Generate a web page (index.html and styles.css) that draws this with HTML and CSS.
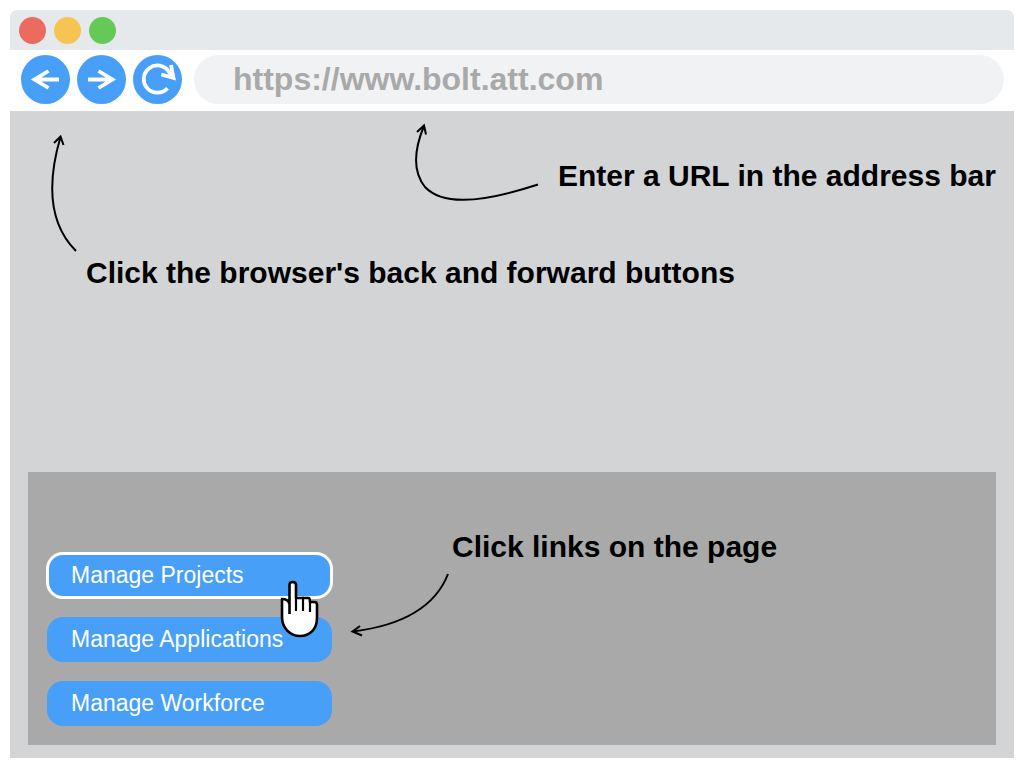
FILE: index.html
```html
<!DOCTYPE html>
<html lang="en">
<head>
<meta charset="utf-8">
<meta name="viewport" content="width=device-width, initial-scale=1">
<title>Browser basics</title>
<link rel="stylesheet" href="styles.css">
</head>
<body>
<div class="browser">
  <header class="titlebar">
    <span class="dot dot-close"></span>
    <span class="dot dot-minimize"></span>
    <span class="dot dot-zoom"></span>
  </header>
  <nav class="toolbar" aria-label="Browser controls">
    <button class="tool" type="button" aria-label="Back">
      <svg viewBox="0 0 49 49" fill="none" stroke="#fff" stroke-width="3.800"><path d="M38 24.500H14M27.500 16 13.500 24.500 27.500 33"/></svg>
    </button>
    <button class="tool" type="button" aria-label="Forward">
      <svg viewBox="0 0 49 49" fill="none" stroke="#fff" stroke-width="3.800"><path d="M11 24.500H35M21.500 16 35.500 24.500 21.500 33"/></svg>
    </button>
    <button class="tool" type="button" aria-label="Reload">
      <svg viewBox="0 0 49 49" fill="none" stroke="#fff" stroke-width="3.800"><path d="M34.500 33.200A13.600 13.600 0 1 1 36 17L40 22.500"/><path d="M38 10 40.500 22.800 28.300 19.500"/></svg>
    </button>
    <input class="address" type="text" aria-label="Address" value="https://www.bolt.att.com">
  </nav>
  <main class="page">
    <section class="notes">
      <div class="note note-address">
        <svg class="arrow-address" viewBox="0 0 125 80" fill="none" stroke="#000" stroke-width="2"><path d="M123 61.500C60 82 26 81 10 64C-2 49 -1 27 9 3M2 9 9 2.500 11 11.500"/></svg>
        <p class="note-text">Enter a URL in the address bar</p>
      </div>
      <div class="note note-nav">
        <svg class="arrow-nav" viewBox="0 0 28 120" fill="none" stroke="#000" stroke-width="2"><path d="M26 118C-2 90-3 50 10.500 4M4 10 10.500 3.500 13.500 12"/></svg>
        <p class="note-text">Click the browser's back and forward buttons</p>
      </div>
    </section>
    <section class="panel">
      <div class="links">
        <a class="link link-active" href="#projects">Manage Projects
          <svg class="cursor" viewBox="0 0 40 58" fill="#fff" stroke="#000" stroke-width="2.600" stroke-linejoin="round"><path d="M9.500 34V5Q9.500 2 12.700 2Q16 2 16 5V18H22Q23 17.500 24 18H28.500Q30 18 30 22H35Q37 22.500 37 25V38C37 49 30 56 20 56C10 56 2 48 2 37V19Q8 19 9.500 24"/><path d="M16 18V31M23 19V31M30 21V32" stroke-width="2.200"/></svg>
        </a>
        <a class="link" href="#applications">Manage Applications</a>
        <a class="link" href="#workforce">Manage Workforce</a>
      </div>
      <div class="note-links">
        <p class="note-text">Click links on the page</p>
        <svg class="arrow-links" viewBox="0 0 100 66" fill="none" stroke="#000" stroke-width="2"><path d="M98 1C84 37 47 53 3 58.500M10 53 2.500 58.500 12 62.500"/></svg>
      </div>
    </section>
  </main>
</div>
</body>
</html>
```
FILE: styles.css
```css
* { box-sizing: border-box; }

body {
  margin: 0;
  padding: 10px;
  background: #fff;
  font-family: "Liberation Sans", Arial, sans-serif;
}

.browser {
  display: flex;
  flex-direction: column;
  min-height: calc(100vh - 20px);
}

.titlebar {
  display: flex;
  align-items: center;
  gap: 8px;
  height: 40px;
  padding: 0 9px;
  background: #e5e9ec;
  border-radius: 7px 7px 0 0;
}

.dot {
  width: 27px;
  height: 27px;
  border-radius: 50%;
}

.dot-close { background: #ec6b5f; }
.dot-minimize { background: #f5c451; }
.dot-zoom { background: #65c957; }

.toolbar {
  display: flex;
  gap: 7px;
  padding: 5px 10px 7px 11px;
}

.tool {
  flex: none;
  width: 49px;
  height: 49px;
  padding: 0;
  border: 0;
  border-radius: 50%;
  background: #489ff8;
}

.tool svg {
  display: block;
  width: 100%;
}

.address {
  flex: 1;
  min-width: 0;
  height: 49px;
  margin-left: 5px;
  padding: 0 39px;
  border: 0;
  border-radius: 25px;
  background: #f1f2f4;
  color: #a9a9a9;
  font-family: inherit;
  font-size: 32px;
  font-weight: 700;
}

.page {
  flex: 1;
  display: flex;
  flex-direction: column;
  justify-content: space-between;
  padding: 12px 18px 13px;
  background: #d3d4d6;
}

.notes { display: grid; }

.note {
  grid-area: 1 / 1;
  display: flex;
  align-self: start;
}

.note-text {
  margin: 0;
  font-size: 30px;
  line-height: 36px;
  font-weight: 700;
  color: #000;
}

.note-address {
  gap: 18px;
  align-items: flex-end;
  padding-left: 387px;
  white-space: nowrap;
}

.note-address .note-text { margin-bottom: 9px; }

.note-nav {
  gap: 8px;
  padding: 10px 0 0 22px;
}

.note-nav .note-text { margin-top: 122px; }

.arrow-address { flex: none; width: 125px; height: 80px; }
.arrow-nav { flex: none; width: 28px; height: 120px; }
.arrow-links { display: block; width: 100px; height: 66px; }

.panel {
  display: flex;
  gap: 18px;
  padding: 57px 19px 19px;
  background: #a9a9a9;
}

.links {
  display: flex;
  flex-direction: column;
  gap: 19px;
  width: 285px;
  padding-top: 24px;
}

.link {
  position: relative;
  height: 45px;
  padding: 0 24px;
  border-radius: 16px;
  background: #489ff8;
  color: #fff;
  font-size: 23px;
  line-height: 45px;
  text-decoration: none;
}

.link-active {
  outline: 3px solid #fff;
  outline-offset: -2px;
}

.cursor {
  position: absolute;
  z-index: 1;
  top: 27px;
  right: 12px;
  width: 40px;
  height: 58px;
}

.note-links .note-text {
  margin: 0 0 8px 102px;
}
```
